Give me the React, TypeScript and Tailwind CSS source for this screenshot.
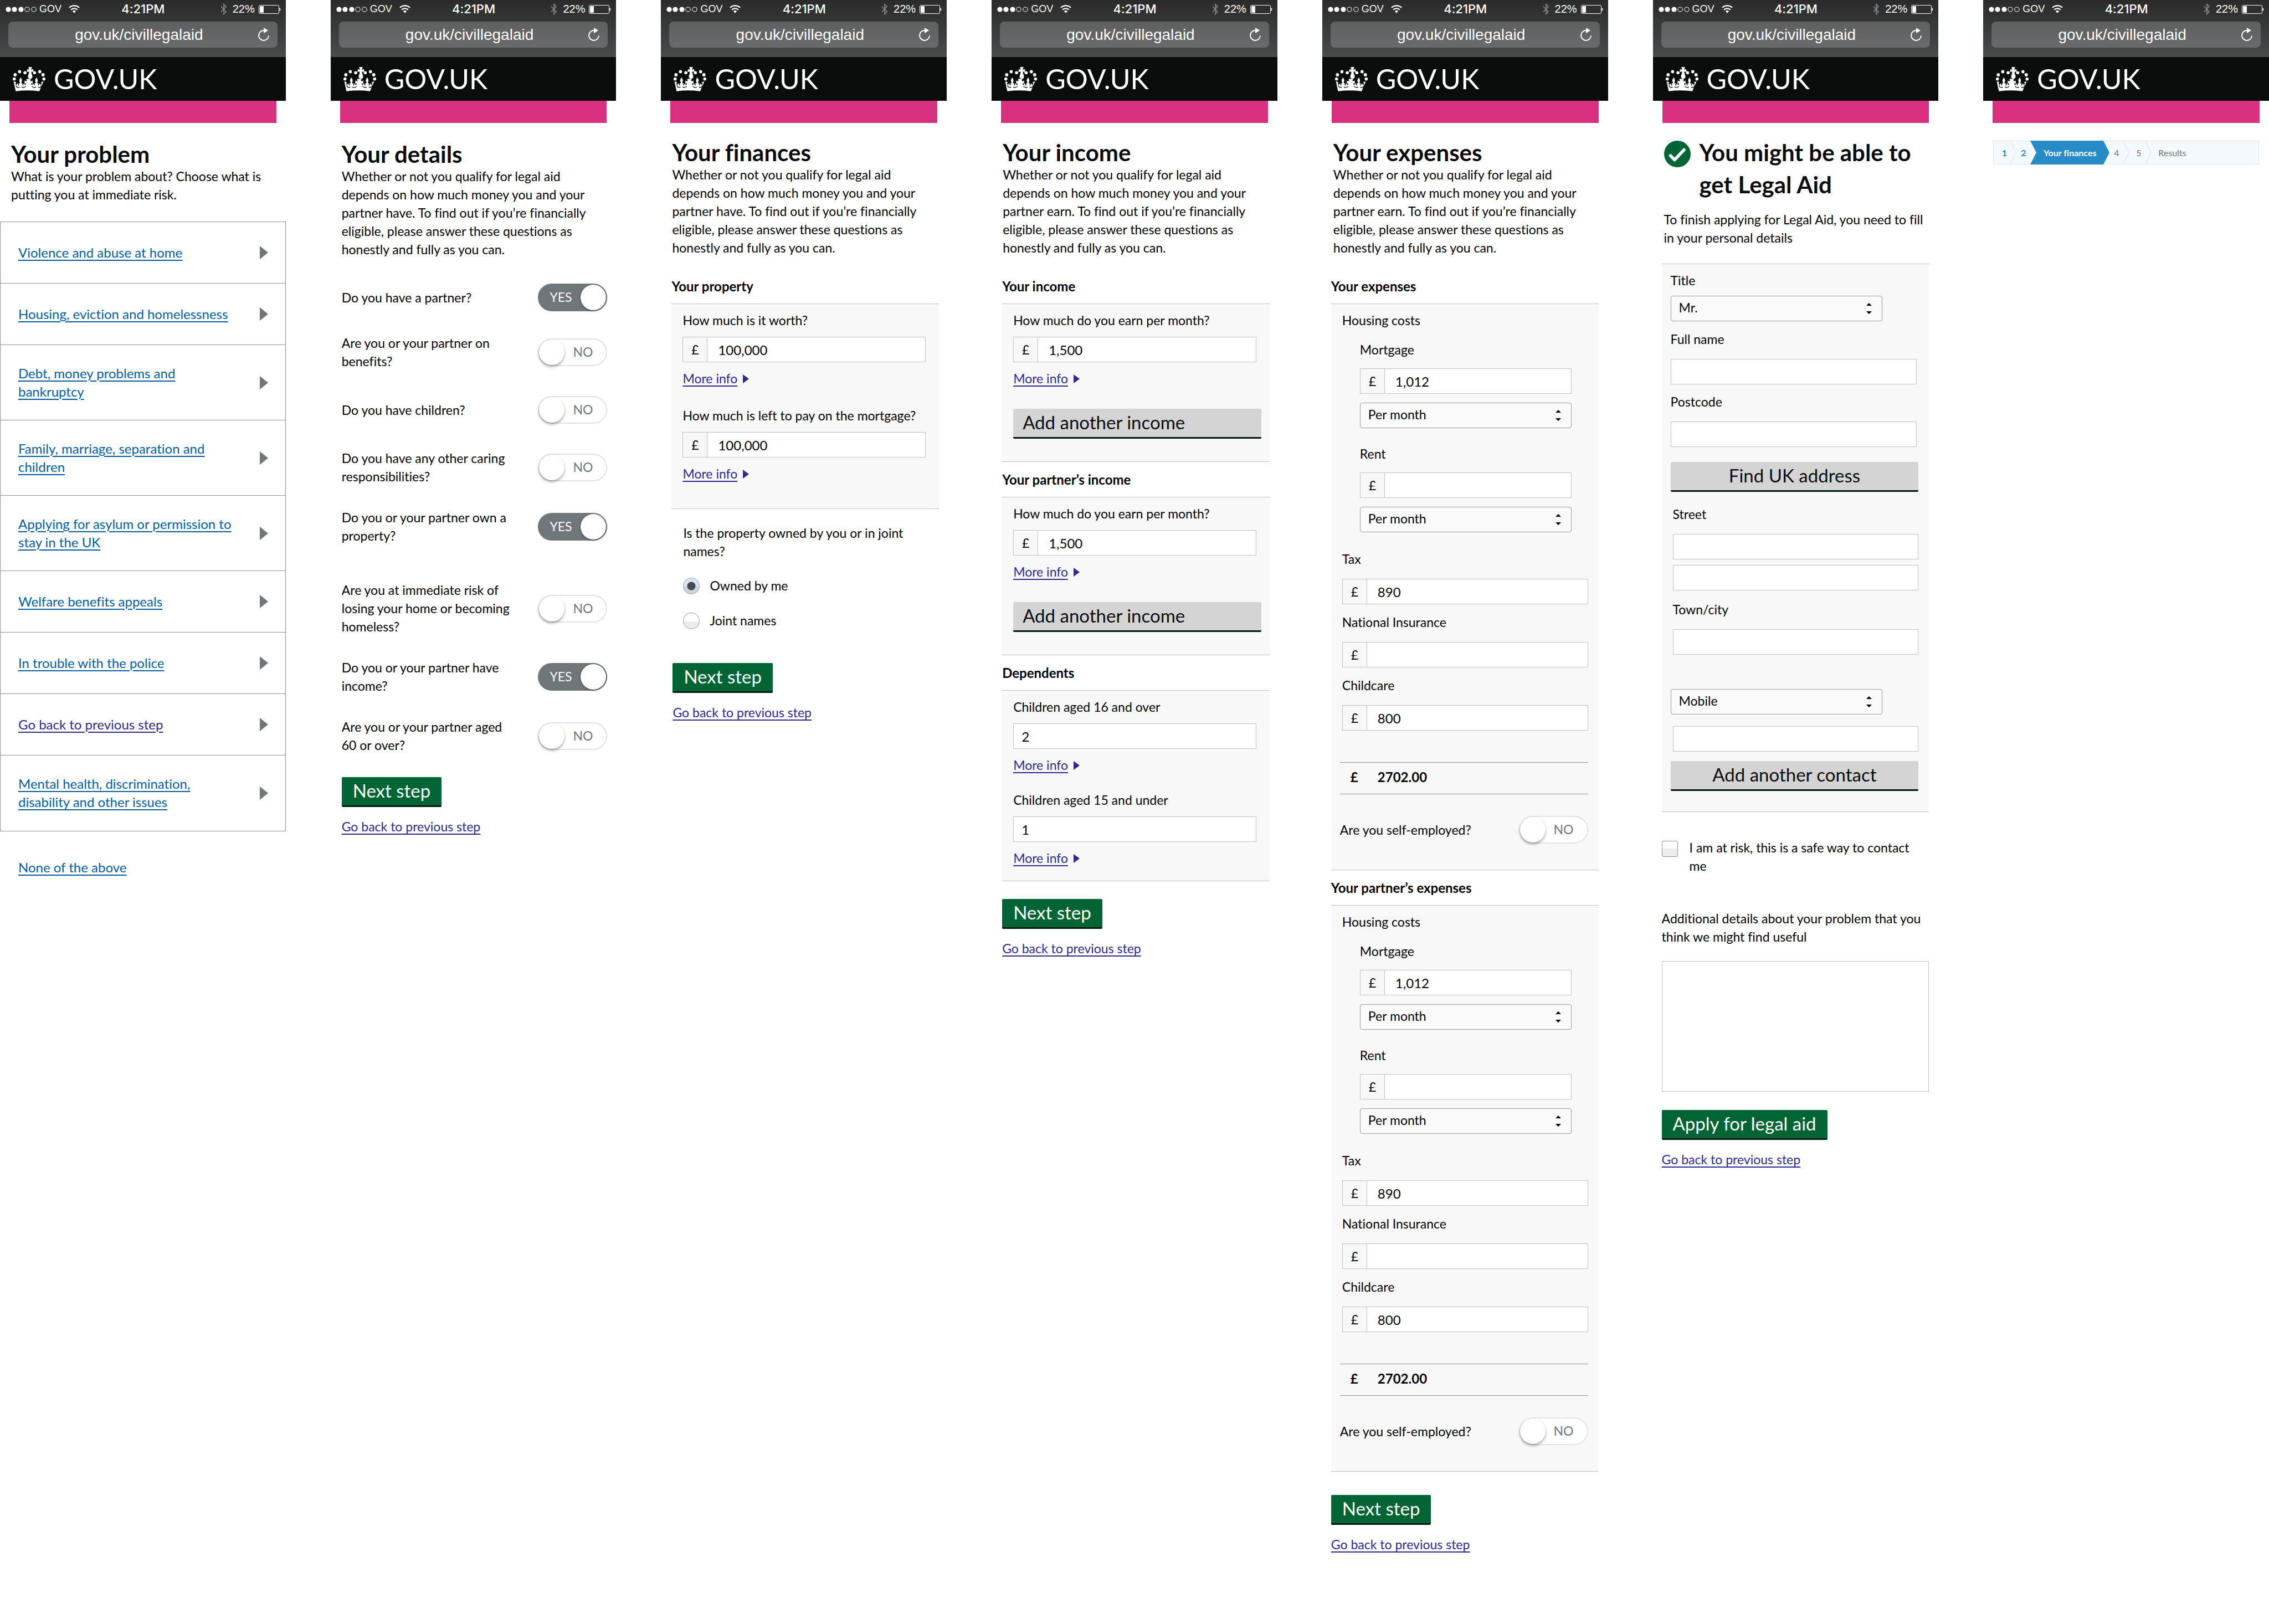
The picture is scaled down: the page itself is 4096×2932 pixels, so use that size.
import React, { useId } from "react";

/* ---------- icons ---------- */

function Crown() {
  return (
    <svg viewBox="84 450 219 163" className="h-[44px] w-[59px]" fill="#fff" aria-hidden="true">
      <circle cx="94" cy="530" r="10.5" />
      <circle cx="100" cy="502" r="11" />
      <circle cx="130" cy="481" r="10.5" />
      <circle cx="166" cy="488" r="10.5" />
      <circle cx="230" cy="488" r="10.5" />
      <circle cx="265" cy="481" r="10.5" />
      <circle cx="287" cy="502" r="11" />
      <circle cx="293" cy="530" r="10.5" />
      <path d="M189 450h24l-6 18c4 0 9-2 14-5l3 22c-6-4-11-5-15-4-2 10 6 22 7 30 1 12-6 18-15 18s-16-6-15-18c1-8 9-20 7-30-5-1-10 1-15 4l3-22c5 3 9 5 13 5z" />
      <path d="M90 546l17 5-5 9c2 6 4 9 9 12-1-6 0-10 4-13 4 4 7 10 6 16 4-1 6-4 5-9l-3-8 8 2c1-6 1-10-2-14-3-7 2-18 8-27 6 9 11 20 8 27-3 4-3 8-2 14l9-3-3 9c-1 5 1 8 5 9-1-6 2-12 6-16 5 3 5 8 4 13 7-3 9-8 9-14l-10 2v-19l11 4c4-1 5-4 4-8l-4-7h32l-4 7c-1 4 0 7 4 8l11-4v19l-10-2c0 6 2 11 9 14-1-5-1-10 4-13 4 4 7 10 6 16 4-1 6-4 5-9l-3-9 9 3c1-6 1-10-2-14-3-7 2-18 8-27 6 9 11 20 8 27-3 4-3 8-2 14l8-2-3 8c-1 5 1 8 5 9-1-6 2-12 6-16 4 3 5 7 4 13 5-3 7-6 9-12l-5-9 17-5-28 66c-52-7-106-7-158 0z" />
      <path
        d="M106 574c2 12 14 16 24 10M144 584c9 6 22 4 28-6M212 578c6 10 18 12 27 6M254 584c10 6 20 2 24-10"
        fill="none"
        stroke="#0b0c0c"
        strokeWidth="5"
      />
    </svg>
  );
}

function SignalDots() {
  return (
    <svg viewBox="0 0 57 12" className="h-[12px] w-[57px]" aria-hidden="true">
      {[5, 16, 28].map((x) => (
        <circle key={x} cx={x} cy="6" r="4.6" fill="#fff" />
      ))}
      {[39, 51].map((x) => (
        <circle key={x} cx={x} cy="6" r="4.1" fill="none" stroke="#fff" strokeWidth="1" />
      ))}
    </svg>
  );
}

function WifiIcon() {
  return (
    <svg viewBox="0 0 72 54" className="h-[15px] w-[20px]" fill="none" stroke="#fff" strokeWidth="8" aria-hidden="true">
      <path d="M3 17Q36-9 69 17" />
      <path d="M15 31Q36 13 57 31" />
      <path d="M25 40Q36 31 47 40L36 53z" fill="#fff" stroke="none" />
    </svg>
  );
}

function BluetoothIcon() {
  return (
    <svg viewBox="0 0 12 21" className="h-[21px] w-[12px]" fill="none" stroke="#8b8c8c" strokeWidth="1.5" aria-hidden="true">
      <path d="M1 5.5l9 9.5-4 4.5v-18l4 4.5-9 9.5" />
    </svg>
  );
}

function BatteryIcon() {
  return (
    <svg viewBox="0 0 40 16" className="h-[16px] w-[40px]" aria-hidden="true">
      <rect x="0.5" y="0.5" width="36" height="15" rx="2" fill="none" stroke="#fff" />
      <rect x="2" y="2" width="7" height="12" fill="#fff" />
      <path d="M37.5 5q2 1 2 3t-2 3z" fill="#fff" />
    </svg>
  );
}

function ReloadIcon() {
  return (
    <svg viewBox="0 0 22 25" className="h-[25px] w-[22px]" aria-hidden="true">
      <path d="M12 5A9 9 0 1 0 20 14.5" fill="none" stroke="#fff" strokeWidth="2" />
      <path d="M11 0l8 5-8 5z" fill="#fff" />
    </svg>
  );
}

function TickIcon() {
  return (
    <svg viewBox="0 0 48 48" className="h-[48px] w-[48px] shrink-0" aria-hidden="true">
      <circle cx="24" cy="24" r="24" fill="#006435" />
      <path d="M11.5 27l7.5 7.5 17-18" fill="none" stroke="#fff" strokeWidth="5.5" strokeLinecap="round" strokeLinejoin="round" />
    </svg>
  );
}

/* ---------- phone chrome ---------- */

function PhoneHeader() {
  return (
    <header className="text-white">
      <div className="h-[103px] bg-linear-to-b from-[#2b2b2b] via-[#393a3a] to-[#4a4b4d] font-['Liberation_Sans',sans-serif]">
        <div className="grid h-[33px] grid-cols-[1fr_auto_1fr] items-center pr-[9px] pl-[10px]">
          <div className="flex items-center">
            <SignalDots />
            <span className="ml-[4px] text-[18px]">GOV</span>
            <span className="ml-[13px]">
              <WifiIcon />
            </span>
          </div>
          <span className="font-['Inter',sans-serif] text-[22px] font-medium">4:21PM</span>
          <div className="flex items-center justify-end">
            <BluetoothIcon />
            <span className="mr-[7px] ml-[10px] text-[20px]">22%</span>
            <BatteryIcon />
          </div>
        </div>
        <div className="mx-[15px] mt-[6px] grid h-[47px] grid-cols-[1fr_auto_1fr] items-center rounded-[8px] bg-linear-to-b from-[#5e5f5f] to-[#696a6c] pr-[14px]">
          <span />
          <span className="text-[28px]">gov.uk/civillegalaid</span>
          <button type="button" aria-label="Reload" className="justify-self-end">
            <ReloadIcon />
          </button>
        </div>
      </div>
      <div className="flex h-[79px] items-center gap-[15px] bg-[#0b0c0c] pl-[23px]">
        <Crown />
        <span className="text-[50px] leading-[79px]">GOV.UK</span>
      </div>
      <div className="mx-[17px] h-[40px] bg-[#d9307f]" />
    </header>
  );
}

function Phone({ children }: { children: React.ReactNode }) {
  return (
    <section className="min-w-0">
      <PhoneHeader />
      {children}
    </section>
  );
}

/* ---------- shared form parts ---------- */

function Lines({ text }: { text: string[] }) {
  return (
    <>
      {text.map((line, i) => (
        <React.Fragment key={line}>
          {i > 0 && <br />}
          {line}
        </React.Fragment>
      ))}
    </>
  );
}

function Intro({ title, text }: { title: string; text: string[] }) {
  return (
    <div className="px-[20px] whitespace-nowrap">
      <h1 className="pt-[2px] text-[42px] leading-[48px] font-bold text-[#0b0c0c]">{title}</h1>
      <p>
        <Lines text={text} />
      </p>
    </div>
  );
}

function NextStep({ label = "Next step" }: { label?: string }) {
  return (
    <>
      <button
        type="button"
        className="block h-[54px] rounded-[2px] border-b-[3px] border-[#00190d] bg-[#006435] px-[20px] pb-[2px] text-[33px] leading-[49px] text-white"
      >
        {label}
      </button>
      <a href="#back" className="mt-[19px] inline-block text-[#2e2a94] underline decoration-2 underline-offset-4">
        Go back to previous step
      </a>
    </>
  );
}

function GreyButton({ label, align }: { label: string; align: string }) {
  return (
    <button
      type="button"
      className={
        "block h-[54px] w-full rounded-[2px] border-b-[3px] border-[#00190d] bg-[#d4d4d4] px-[17px] pb-[2px] text-[33px] leading-[49px] text-[#0b0c0c] " +
        align
      }
    >
      {label}
    </button>
  );
}

function GroupTitle({ children }: { children: React.ReactNode }) {
  return <h2 className="my-[15px] text-[24px] leading-[33px] font-bold">{children}</h2>;
}

function MoneyField({ label, value, gap }: { label: string; value: string; gap: string }) {
  const id = useId();
  return (
    <div className={"flex flex-col " + gap}>
      <label htmlFor={id} className="whitespace-nowrap">
        {label}
      </label>
      <div className="flex h-[46px] border border-[#bfc1c3] bg-white">
        <span className="flex w-[44px] items-center justify-center border-r border-[#bfc1c3] bg-[#f8f8f8]">£</span>
        <input id={id} type="text" defaultValue={value} className="w-full min-w-0 flex-1 px-[19px] text-[24px] outline-none" />
      </div>
    </div>
  );
}

function TextField({ label, value = "", gap = "gap-[19px]" }: { label?: string; value?: string; gap?: string }) {
  const id = useId();
  return (
    <div className={"flex flex-col " + gap}>
      {label && <label htmlFor={id}>{label}</label>}
      <input
        id={id}
        type="text"
        aria-label={label ? undefined : "Additional line"}
        defaultValue={value}
        className="h-[46px] w-full border border-[#bfc1c3] bg-white px-[14px] text-[24px] outline-none"
      />
    </div>
  );
}

function SelectField({ label, value, width = "w-full" }: { label: string; value: string; width?: string }) {
  return (
    <div className={"relative " + width}>
      <select
        aria-label={label}
        defaultValue={value}
        className="block h-[46px] w-full appearance-none rounded-[4px] border border-[#999b9c] bg-[#fafafa] px-[14px] pb-[3px] outline-none"
      >
        <option>{value}</option>
      </select>
      <svg viewBox="0 0 10 20" className="pointer-events-none absolute top-[13px] right-[19px] h-[20px] w-[10px]" aria-hidden="true">
        <path d="M0 5l5-5 5 5zM0 15l5 5 5-5z" fill="#000" />
      </svg>
    </div>
  );
}

function MoreInfo() {
  return (
    <a href="#more" className="mt-[13px] flex items-center gap-[10px] text-[#2e2a94]">
      <span className="underline decoration-2 underline-offset-4">More info</span>
      <svg viewBox="0 0 11 16" className="h-[16px] w-[11px]" aria-hidden="true">
        <path d="M0 0l11 8-11 8z" fill="#2e2a94" />
      </svg>
    </a>
  );
}

function Toggle({ id, on }: { id: string; on?: boolean }) {
  return (
    <span className="relative block h-[50px] w-[125px] shrink-0">
      <input
        id={id}
        type="checkbox"
        role="switch"
        defaultChecked={on}
        className="block h-[50px] w-[125px] appearance-none rounded-full border-2 border-[#e3e3e3] bg-white checked:border-[#6f777b] checked:bg-[#6f777b]"
      />
      {on ? (
        <>
          <span className="pointer-events-none absolute top-[8px] left-[21px] text-white">YES</span>
          <span className="pointer-events-none absolute top-[2px] right-[2px] h-[46px] w-[46px] rounded-full bg-white shadow-[0_1px_4px_rgba(0,0,0,0.4)]" />
        </>
      ) : (
        <>
          <span className="pointer-events-none absolute top-[8px] left-[63px] text-[#6f777b]">NO</span>
          <span className="pointer-events-none absolute top-[2px] left-[2px] h-[46px] w-[46px] rounded-full bg-white shadow-[0_3px_5px_rgba(0,0,0,0.35)]" />
        </>
      )}
    </span>
  );
}

/* ---------- screens ---------- */

const problems = [
  { text: ["Violence and abuse at home"] },
  { text: ["Housing, eviction and homelessness"] },
  { text: ["Debt, money problems and", "bankruptcy"] },
  { text: ["Family, marriage, separation and", "children"] },
  { text: ["Applying for asylum or permission to", "stay in the UK"] },
  { text: ["Welfare benefits appeals"] },
  { text: ["In trouble with the police"] },
  { text: ["Go back to previous step"], visited: true },
  { text: ["Mental health, discrimination,", "disability and other issues"] },
];

function ProblemScreen() {
  return (
    <Phone>
      <div className="pt-[30px]">
        <Intro title="Your problem" text={["What is your problem about? Choose what is", "putting you at immediate risk."]} />
        <ul className="mt-[32px] border border-[#8f9293] text-[24px]">
          {problems.map((p) => (
            <li
              key={p.text[0]}
              className={
                "flex items-center justify-between border-b border-[#8f9293] pr-[31px] pl-[32px] last:border-b-0 " +
                (p.text.length > 1 ? "h-[136px]" : "h-[111px]")
              }
            >
              <a
                href="#problem"
                className={
                  "pb-[2px] whitespace-nowrap underline decoration-2 underline-offset-4 " +
                  (p.visited ? "text-[#2e2a94]" : "text-[#005ea5]")
                }
              >
                <Lines text={p.text} />
              </a>
              <svg viewBox="0 0 15 24" className="h-[24px] w-[15px]" aria-hidden="true">
                <path d="M0 0l15 12-15 12z" fill="#6f777b" />
              </svg>
            </li>
          ))}
        </ul>
        <a
          href="#none"
          className="mt-[48px] ml-[33px] inline-block text-[24px] text-[#005ea5] underline decoration-2 underline-offset-4"
        >
          None of the above
        </a>
      </div>
    </Phone>
  );
}

const questions = [
  { text: ["Do you have a partner?"], on: true, gap: "mt-[45px]" },
  { text: ["Are you or your partner on", "benefits?"], gap: "mt-[41px]" },
  { text: ["Do you have children?"], gap: "mt-[46px]" },
  { text: ["Do you have any other caring", "responsibilities?"], gap: "mt-[46px]" },
  { text: ["Do you or your partner own a", "property?"], on: true, gap: "mt-[41px]" },
  { text: ["Are you at immediate risk of", "losing your home or becoming", "homeless?"], gap: "mt-[65px]" },
  { text: ["Do you or your partner have", "income?"], on: true, gap: "mt-[41px]" },
  { text: ["Are you or your partner aged", "60 or over?"], gap: "mt-[41px]" },
];

function Question({ text, on, gap }: { text: string[]; on?: boolean; gap: string }) {
  const id = useId();
  return (
    <div className={"flex items-center justify-between pr-[16px] pl-[20px] " + gap}>
      <label htmlFor={id} className="whitespace-nowrap">
        <Lines text={text} />
      </label>
      <Toggle id={id} on={on} />
    </div>
  );
}

function DetailsScreen() {
  return (
    <Phone>
      <div className="pt-[30px]">
        <Intro
          title="Your details"
          text={[
            "Whether or not you qualify for legal aid",
            "depends on how much money you and your",
            "partner have. To find out if you’re financially",
            "eligible, please answer these questions as",
            "honestly and fully as you can.",
          ]}
        />
        {questions.map((q) => (
          <Question key={q.text[0]} {...q} />
        ))}
        <div className="mt-[41px] px-[20px]">
          <NextStep />
        </div>
      </div>
    </Phone>
  );
}

function Panel({ children, pad }: { children: React.ReactNode; pad: string }) {
  return <div className={"border-y border-[#bfc1c3] bg-[#f8f8f8] pt-[13px] " + pad}>{children}</div>;
}

function FinancesScreen() {
  return (
    <Phone>
      <div className="pt-[27px]">
        <Intro
          title="Your finances"
          text={[
            "Whether or not you qualify for legal aid",
            "depends on how much money you and your",
            "partner have. To find out if you’re financially",
            "eligible, please answer these questions as",
            "honestly and fully as you can.",
          ]}
        />
        <div className="mt-[36px] mr-[14px] ml-[19px]">
          <GroupTitle>Your property</GroupTitle>
          <Panel pad="pb-[46px] pl-[20px] pr-[24px]">
            <MoneyField label="How much is it worth?" value="100,000" gap="gap-[13px]" />
            <MoreInfo />
            <div className="mt-[34px]">
              <MoneyField label="How much is left to pay on the mortgage?" value="100,000" gap="gap-[13px]" />
              <MoreInfo />
            </div>
          </Panel>
        </div>
        <fieldset className="mt-[27px] pl-[40px]">
          <legend className="whitespace-nowrap">
            <Lines text={["Is the property owned by you or in joint", "names?"]} />
          </legend>
          <label className="mt-[29px] flex items-center gap-[18px]">
            <input
              type="radio"
              name="owner"
              defaultChecked
              className="h-[30px] w-[30px] appearance-none rounded-full border border-[#9a9c9d] bg-[radial-gradient(circle,#494949_7px,transparent_8px),linear-gradient(#d5e8f5_55%,#c5d7e3_55%)]"
            />
            Owned by me
          </label>
          <label className="mt-[30px] flex items-center gap-[18px]">
            <input
              type="radio"
              name="owner"
              className="h-[30px] w-[30px] appearance-none rounded-full border border-[#9a9c9d] bg-[linear-gradient(#ffffff_55%,#ececec_55%)]"
            />
            Joint names
          </label>
        </fieldset>
        <div className="mt-[60px] px-[21px]">
          <NextStep />
        </div>
      </div>
    </Phone>
  );
}

const earnText = [
  "Whether or not you qualify for legal aid",
  "depends on how much money you and your",
  "partner earn. To find out if you’re financially",
  "eligible, please answer these questions as",
  "honestly and fully as you can.",
];

function IncomePanel() {
  return (
    <Panel pad="pb-[41px] pl-[20px] pr-[15px]">
      <div className="pr-[9px]">
        <MoneyField label="How much do you earn per month?" value="1,500" gap="gap-[13px]" />
        <MoreInfo />
      </div>
      <div className="mt-[38px]">
        <GreyButton label="Add another income" align="text-left" />
      </div>
    </Panel>
  );
}

function IncomeScreen() {
  return (
    <Phone>
      <div className="pt-[27px]">
        <Intro title="Your income" text={earnText} />
        <div className="mt-[36px] mr-[14px] ml-[19px]">
          <GroupTitle>Your income</GroupTitle>
          <IncomePanel />
          <GroupTitle>Your partner’s income</GroupTitle>
          <IncomePanel />
          <GroupTitle>Dependents</GroupTitle>
          <Panel pad="pb-[24px] pl-[20px] pr-[24px]">
            <TextField label="Children aged 16 and over" value="2" gap="gap-[13px]" />
            <MoreInfo />
            <div className="mt-[30px]">
              <TextField label="Children aged 15 and under" value="1" gap="gap-[13px]" />
              <MoreInfo />
            </div>
          </Panel>
          <div className="mt-[32px]">
            <NextStep />
          </div>
        </div>
      </div>
    </Phone>
  );
}

function ExpensesPanel() {
  const id = useId();
  return (
    <Panel pad="pb-[47px] pl-[20px] pr-[19px]">
      <p>Housing costs</p>
      <div className="mt-[20px] mr-[30px] ml-[32px]">
        <MoneyField label="Mortgage" value="1,012" gap="gap-[17px]" />
        <div className="mt-[16px]">
          <SelectField label="Mortgage period" value="Per month" />
        </div>
        <div className="mt-[30px]">
          <MoneyField label="Rent" value="" gap="gap-[17px]" />
        </div>
        <div className="mt-[16px]">
          <SelectField label="Rent period" value="Per month" />
        </div>
      </div>
      <div className="mt-[32px] flex flex-col gap-[16px]">
        <MoneyField label="Tax" value="890" gap="gap-[19px]" />
        <MoneyField label="National Insurance" value="" gap="gap-[19px]" />
        <MoneyField label="Childcare" value="800" gap="gap-[19px]" />
      </div>
      <div className="mt-[57px] -ml-[4px] flex h-[58px] items-center border-y border-[#8f9293] pb-[5px] pl-[19px] text-[24px] font-bold">
        <span className="w-[49px]">£</span>
        <output>2702.00</output>
      </div>
      <div className="mt-[39px] -ml-[4px] flex items-center justify-between">
        <label htmlFor={id}>Are you self-employed?</label>
        <Toggle id={id} />
      </div>
    </Panel>
  );
}

function ExpensesScreen() {
  return (
    <Phone>
      <div className="pt-[27px]">
        <Intro title="Your expenses" text={earnText} />
        <div className="mt-[36px] mr-[17px] ml-[16px]">
          <GroupTitle>Your expenses</GroupTitle>
          <ExpensesPanel />
          <GroupTitle>Your partner’s expenses</GroupTitle>
          <ExpensesPanel />
          <div className="mt-[42px]">
            <NextStep />
          </div>
        </div>
      </div>
    </Phone>
  );
}

function ResultScreen() {
  const details = useId();
  return (
    <Phone>
      <div className="mr-[17px] ml-[16px] pt-[24px]">
        <div className="flex gap-[16px] pl-[4px]">
          <div className="pt-[8px]">
            <TickIcon />
          </div>
          <h1 className="text-[42px] leading-[58px] font-bold whitespace-nowrap text-[#0b0c0c]">
            <Lines text={["You might be able to", "get Legal Aid"]} />
          </h1>
        </div>
        <p className="mt-[18px] pl-[4px] whitespace-nowrap">
          <Lines text={["To finish applying for Legal Aid, you need to fill", "in your personal details"]} />
        </p>
        <div className="mt-[30px]">
          <Panel pad="pb-[37px] pl-[16px] pr-[19px]">
            <p>Title</p>
            <div className="mt-[11px]">
              <SelectField label="Title" value="Mr." width="w-[382px]" />
            </div>
            <div className="mt-[16px] flex flex-col gap-[15px] pr-[3px]">
              <TextField label="Full name" />
              <TextField label="Postcode" />
            </div>
            <div className="mt-[27px]">
              <GreyButton label="Find UK address" align="text-center" />
            </div>
            <div className="mt-[24px] pl-[4px]">
              <TextField label="Street" />
              <div className="mt-[10px]">
                <TextField />
              </div>
              <div className="mt-[18px]">
                <TextField label="Town/city" />
              </div>
            </div>
            <div className="mt-[62px]">
              <SelectField label="Contact type" value="Mobile" width="w-[382px]" />
            </div>
            <div className="mt-[21px] pl-[4px]">
              <TextField />
            </div>
            <div className="mt-[17px]">
              <GreyButton label="Add another contact" align="text-center" />
            </div>
          </Panel>
        </div>
        <label className="mt-[48px] flex items-start gap-[21px] whitespace-nowrap">
          <input
            type="checkbox"
            className="mt-[4px] h-[29px] w-[29px] shrink-0 appearance-none rounded-[3px] border border-[#8f9293] bg-[linear-gradient(#ffffff_50%,#ececec_50%)]"
          />
          <span>
            <Lines text={["I am at risk, this is a safe way to contact", "me"]} />
          </span>
        </label>
        <label htmlFor={details} className="mt-[62px] block whitespace-nowrap">
          <Lines text={["Additional details about your problem that you", "think we might find useful"]} />
        </label>
        <textarea id={details} className="mt-[27px] block h-[236px] w-full resize-none border border-[#bfc1c3] bg-white outline-none" />
        <div className="mt-[33px]">
          <NextStep label="Apply for legal aid" />
        </div>
      </div>
    </Phone>
  );
}

function StepDivider() {
  return (
    <svg viewBox="0 0 11 41" className="h-[41px] w-[11px] shrink-0" aria-hidden="true">
      <path d="M0 0l10 20.5-10 20.5" fill="none" stroke="#dbebf7" strokeWidth="1.5" />
    </svg>
  );
}

function ProgressScreen() {
  return (
    <Phone>
      <ol className="mx-[18px] mt-[32px] flex h-[43px] items-center border border-[#d6e8f5] bg-[#f3f9fd] text-[16px] leading-[41px] text-[#6f777b]">
        <li className="w-[30px] pl-[8px] text-center font-bold text-[#268bc7]">1</li>
        <StepDivider />
        <li className="w-[25px] text-center font-bold text-[#268bc7]">2</li>
        <li className="flex h-[43px] items-center font-bold text-white">
          <svg viewBox="0 0 11 43" className="h-[43px] w-[11px]" aria-hidden="true">
            <path d="M0 0h11v43h-11l11-21.5z" fill="#268bc7" />
          </svg>
          <span className="h-[43px] w-[121px] bg-[#268bc7] text-center leading-[43px]">Your finances</span>
          <svg viewBox="0 0 11 43" className="h-[43px] w-[11px]" aria-hidden="true">
            <path d="M0 0l11 21.5-11 21.5z" fill="#268bc7" />
          </svg>
        </li>
        <li className="w-[25px] text-center">4</li>
        <StepDivider />
        <li className="w-[29px] pl-[4px] text-center">5</li>
        <StepDivider />
        <li className="pl-[12px]">Results</li>
      </ol>
    </Phone>
  );
}

export default function App() {
  return (
    <main className="grid min-h-screen grid-cols-7 gap-x-[81px] bg-white font-['Lato',sans-serif] text-[23px] leading-[33px] text-black [font-variant-ligatures:none]">
      <ProblemScreen />
      <DetailsScreen />
      <FinancesScreen />
      <IncomeScreen />
      <ExpensesScreen />
      <ResultScreen />
      <ProgressScreen />
    </main>
  );
}
